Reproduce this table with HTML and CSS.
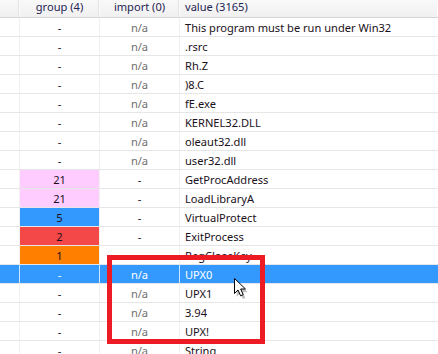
FILE: index.html
```html
<!DOCTYPE html>
<html>
<head>
<meta charset="utf-8">
<link rel="stylesheet" href="styles.css">
</head>
<body>
<div class="view">
  <div class="row head">
    <div class="c c0"></div>
    <div class="c c1">group (4)</div>
    <div class="c c2">import (0)</div>
    <div class="c c3">value (3165)</div>
  </div>
  <div class="row"><div class="c c0"></div><div class="c c1">-</div><div class="c c2 na">n/a</div><div class="c c3">This program must be run under Win32</div></div>
  <div class="row"><div class="c c0"></div><div class="c c1">-</div><div class="c c2 na">n/a</div><div class="c c3">.rsrc</div></div>
  <div class="row"><div class="c c0"></div><div class="c c1">-</div><div class="c c2 na">n/a</div><div class="c c3">Rh.Z</div></div>
  <div class="row"><div class="c c0"></div><div class="c c1">-</div><div class="c c2 na">n/a</div><div class="c c3">)8.C</div></div>
  <div class="row"><div class="c c0"></div><div class="c c1">-</div><div class="c c2 na">n/a</div><div class="c c3">fE.exe</div></div>
  <div class="row"><div class="c c0"></div><div class="c c1">-</div><div class="c c2 na">n/a</div><div class="c c3">KERNEL32.DLL</div></div>
  <div class="row"><div class="c c0"></div><div class="c c1">-</div><div class="c c2 na">n/a</div><div class="c c3">oleaut32.dll</div></div>
  <div class="row"><div class="c c0"></div><div class="c c1">-</div><div class="c c2 na">n/a</div><div class="c c3">user32.dll</div></div>
  <div class="row"><div class="c c0"></div><div class="c c1 pink">21</div><div class="c c2">-</div><div class="c c3">GetProcAddress</div></div>
  <div class="row"><div class="c c0"></div><div class="c c1 pink">21</div><div class="c c2">-</div><div class="c c3">LoadLibraryA</div></div>
  <div class="row"><div class="c c0"></div><div class="c c1 blue">5</div><div class="c c2">-</div><div class="c c3">VirtualProtect</div></div>
  <div class="row"><div class="c c0"></div><div class="c c1 red">2</div><div class="c c2">-</div><div class="c c3">ExitProcess</div></div>
  <div class="row"><div class="c c0"></div><div class="c c1 orange">1</div><div class="c c2">-</div><div class="c c3">RegCloseKey</div></div>
  <div class="row sel"><div class="c c0"></div><div class="c c1">-</div><div class="c c2">n/a</div><div class="c c3">UPX0</div></div>
  <div class="row"><div class="c c0"></div><div class="c c1">-</div><div class="c c2 na">n/a</div><div class="c c3">UPX1</div></div>
  <div class="row"><div class="c c0"></div><div class="c c1">-</div><div class="c c2 na">n/a</div><div class="c c3">3.94</div></div>
  <div class="row"><div class="c c0"></div><div class="c c1">-</div><div class="c c2 na">n/a</div><div class="c c3">UPX!</div></div>
  <div class="row"><div class="c c0"></div><div class="c c1">-</div><div class="c c2 na">n/a</div><div class="c c3">String</div></div>
  <div class="mark"></div>
  <svg class="cursor" width="14" height="21" viewBox="0 0 14 21">
    <path d="M1.5 2.5 L1.5 17.5 L5 14 L7.6 19.8 L10.2 18.7 L7.7 13 L12.5 13 Z" fill="#000" opacity="0.25" transform="translate(1.2,1.2)"/>
    <path d="M0.5 0.5 L0.5 15.5 L4 12 L6.6 17.8 L9.2 16.7 L6.7 11 L11.5 11 Z" fill="#fff" stroke="#000" stroke-width="1" stroke-linejoin="miter"/>
  </svg>
</div>
</body>
</html>
```
FILE: styles.css
```css
html, body {
  margin: 0;
  padding: 0;
  background: #fff;
}
.view {
  position: relative;
  width: 438px;
  height: 354px;
  overflow: hidden;
  font-family: "Noto Sans", "Liberation Sans", sans-serif;
  font-size: 11.1px;
  color: #1a1020;
}
.row {
  display: grid;
  grid-template-columns: 20px 80px 80px 1fr;
  height: 19px;
  border-bottom: 1px solid #e6e6e6;
  box-sizing: border-box;
}
.c {
  display: flex;
  align-items: center;
  justify-content: center;
  border-right: 1px solid #f1f1f1;
  white-space: nowrap;
  line-height: 1;
  padding-top: 1px;
}
.c3 {
  justify-content: flex-start;
  padding-left: 5px;
  border-right: none;
}
.head {
  height: 18px;
  background: linear-gradient(#f9f9f9, #f0f0f0);
  border-bottom: 1px solid #d5d5d5;
  color: #1e2352;
}
.head .c {
  border-right: 1px solid #fcfcfc;
  box-shadow: inset -1px 0 0 #e2e2e2;
  padding-top: 0;
  padding-bottom: 3px;
}
.head .c3 {
  box-shadow: none;
}
.na {
  color: #6f6f6f;
}
.pink { background: #ffccff; }
.blue { background: #3399ff; }
.red { background: #f44848; }
.orange { background: #ff8000; }
.sel {
  background: #3399ff;
  color: #fff;
}
.sel .c {
  border-right-color: #cfe5ff;
}
.mark {
  position: absolute;
  left: 107px;
  top: 255px;
  width: 158px;
  height: 89px;
  box-sizing: border-box;
  border: 5px solid #ed1c24;
}
.cursor {
  position: absolute;
  left: 234px;
  top: 278px;
}
```
